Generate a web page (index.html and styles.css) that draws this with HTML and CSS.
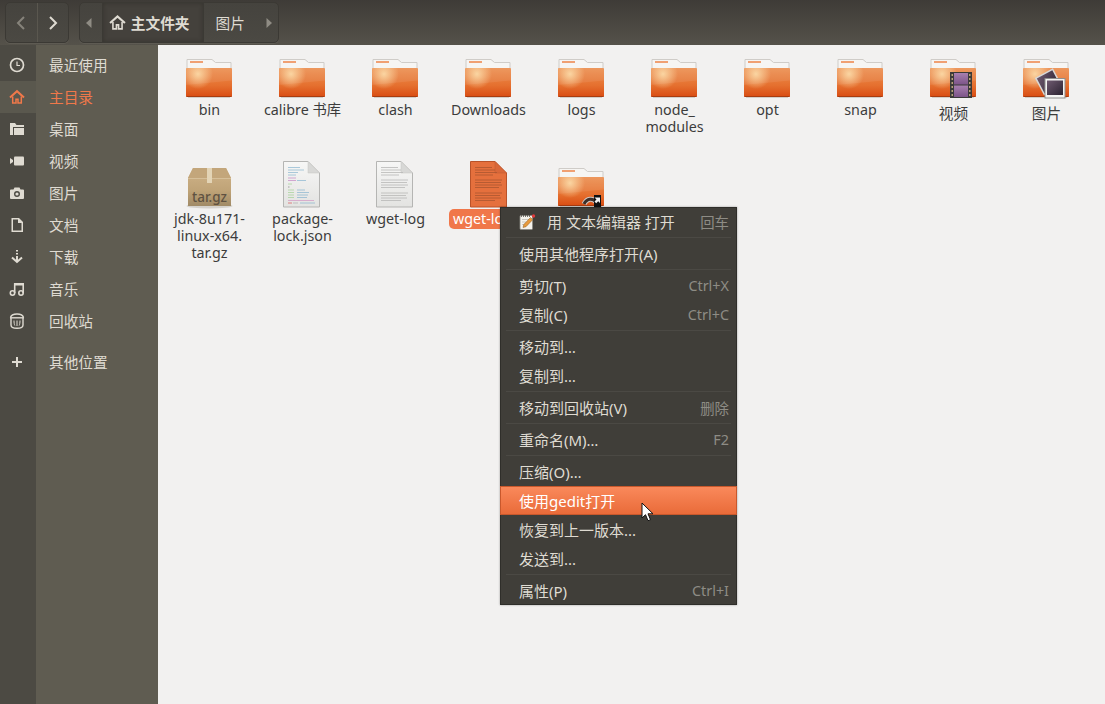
FILE: index.html
```html
<!DOCTYPE html>
<html lang="zh-CN">
<head>
    <meta charset="UTF-8">
    <title>图片</title>
    <link rel="stylesheet" href="styles.css">
</head>
<body>
    <svg class="defs" width="0" height="0">
        <defs>
            <linearGradient id="folder-body" x1="0" y1="0" x2="0" y2="1">
                <stop offset="0" stop-color="#ec8f50"/>
                <stop offset="0.6" stop-color="#e5702f"/>
                <stop offset="1" stop-color="#d94c12"/>
            </linearGradient>
            <radialGradient id="folder-glow" gradientUnits="userSpaceOnUse" cx="13" cy="21" r="15">
                <stop offset="0" stop-color="#fbd9a6" stop-opacity="0.95"/>
                <stop offset="1" stop-color="#fbd9a6" stop-opacity="0"/>
            </radialGradient>
            <linearGradient id="box-body" x1="0" y1="0" x2="0" y2="1">
                <stop offset="0" stop-color="#cfb389"/>
                <stop offset="0.6" stop-color="#bfa377"/>
                <stop offset="1" stop-color="#a08a66"/>
            </linearGradient>
            <linearGradient id="film-frame" x1="0" y1="0" x2="0" y2="1">
                <stop offset="0" stop-color="#a87fb0"/>
                <stop offset="1" stop-color="#7c5488"/>
            </linearGradient>
            <linearGradient id="photo-fill" x1="0" y1="0" x2="1" y2="1">
                <stop offset="0" stop-color="#6f5a70"/>
                <stop offset="1" stop-color="#2a2230"/>
            </linearGradient>
            <linearGradient id="paper" x1="0" y1="0" x2="0" y2="1">
                <stop offset="0" stop-color="#f7f7f6"/>
                <stop offset="1" stop-color="#e3e3e1"/>
            </linearGradient>

            <symbol id="folder" viewBox="0 0 48 48" overflow="visible">
                <path d="M2 6.500h25l3.500 3H46v8H2z" fill="#f6f5f3" stroke="#cfccc8" stroke-width="1"/>
                <rect x="5" y="8" width="13" height="2" fill="#f0a072"/>
                <rect x="1" y="15" width="46" height="29" rx="1" fill="url(#folder-body)"/>
                <path d="M1 16a1 1 0 0 1 1-1h44a1 1 0 0 1 1 1v11.500L1 32z" fill="#fff" opacity="0.08"/>
                <rect x="1" y="15" width="46" height="29" rx="1" fill="url(#folder-glow)"/>
                <path d="M1.500 43.500h45" stroke="#a83c10" stroke-width="1"/>
                <rect x="3" y="44" width="42" height="1" fill="#d2cec9"/>
            </symbol>

            <symbol id="ic-clock" viewBox="0 0 16 16">
                <circle cx="8" cy="8" r="6.500" fill="none" stroke="currentColor" stroke-width="1.700"/>
                <path d="M8 4.500V8.500H11" fill="none" stroke="currentColor" stroke-width="1.200"/>
            </symbol>
            <symbol id="ic-home" viewBox="0 0 16 16">
                <path d="M1 8.500L8 2.200 15 8.500" fill="none" stroke="currentColor" stroke-width="2"/>
                <path d="M3.700 7.500V14H7V10.200H9V14H12.300V7.500" fill="none" stroke="currentColor" stroke-width="1.500"/>
            </symbol>
            <symbol id="ic-folder" viewBox="0 0 16 16">
                <path d="M1 2h5l1.500 2H15v2H4v8H1z" fill="currentColor"/>
                <rect x="5" y="7" width="10" height="7" fill="currentColor"/>
            </symbol>
            <symbol id="ic-video" viewBox="0 0 16 16">
                <rect x="5" y="3.500" width="10" height="9" rx="1" fill="currentColor"/>
                <path d="M1 5l3 2v2l-3 2z" fill="currentColor"/>
            </symbol>
            <symbol id="ic-camera" viewBox="0 0 16 16">
                <path fill-rule="evenodd" d="M5.500 2.500h5l1 2H14a1 1 0 0 1 1 1V13a1 1 0 0 1-1 1H2a1 1 0 0 1-1-1V5.500a1 1 0 0 1 1-1h2.500zM8 6a3 3 0 1 0 0 6a3 3 0 0 0 0-6z" fill="currentColor"/>
                <circle cx="8" cy="9" r="1.600" fill="currentColor"/>
            </symbol>
            <symbol id="ic-file" viewBox="0 0 16 16">
                <path fill-rule="evenodd" d="M2.500 1H10l4 4v10H2.500zM4 2.500V13.500H12.500V6H9V2.500z" fill="currentColor"/>
            </symbol>
            <symbol id="ic-download" viewBox="0 0 16 16">
                <path d="M7 1h2v1.500H7zM7 4h2v1.500H7zM7 7h2v5H7z" fill="currentColor"/>
                <path d="M3 8.500L8 13l5-4.500" fill="none" stroke="currentColor" stroke-width="2"/>
            </symbol>
            <symbol id="ic-music" viewBox="0 0 16 16">
                <circle cx="3.500" cy="12" r="2.200" fill="none" stroke="currentColor" stroke-width="1.600"/>
                <circle cx="12" cy="12" r="2.200" fill="none" stroke="currentColor" stroke-width="1.600"/>
                <path d="M5.700 12V3H14.200V12" fill="none" stroke="currentColor" stroke-width="1.600"/>
                <rect x="5" y="2" width="10" height="2.500" fill="currentColor"/>
            </symbol>
            <symbol id="ic-trash" viewBox="0 0 16 16">
                <path d="M1.500 4.500C2 2.500 4 1 8 1s6 1.500 6.500 3.500" fill="none" stroke="currentColor" stroke-width="1.400"/>
                <path d="M1 4.800h14" stroke="currentColor" stroke-width="1.400"/>
                <path d="M2 5v7c0 2 2 3.300 6 3.300s6-1.300 6-3.300V5" fill="none" stroke="currentColor" stroke-width="1.400"/>
                <path d="M5 7.500c0 2 .3 4 .8 5M8 7.500v5.500M11 7.500c0 2-.3 4-.8 5" fill="none" stroke="currentColor" stroke-width="1"/>
            </symbol>
            <symbol id="ic-plus" viewBox="0 0 16 16">
                <path d="M7 3h2v4h4v2H9v4H7V9H3V7h4z" fill="currentColor"/>
            </symbol>
        </defs>
    </svg>

    <div class="window">
        <header class="toolbar">
            <div class="btn-group nav-group">
                <div class="nav-btn disabled">
                    <svg width="16" height="16" viewBox="0 0 16 16"><path d="M11 2L5 8l6 6" fill="none" stroke="currentColor" stroke-width="2"/></svg>
                </div>
                <div class="nav-btn">
                    <svg width="16" height="16" viewBox="0 0 16 16"><path d="M5 2l6 6-6 6" fill="none" stroke="currentColor" stroke-width="2"/></svg>
                </div>
            </div>
            <div class="btn-group path-group">
                <div class="path-arrow back">
                    <svg width="8" height="12" viewBox="0 0 8 12"><path d="M6.500 1v10L1 6z" fill="currentColor"/></svg>
                </div>
                <div class="path-btn active">
                    <svg class="path-home" width="17" height="17"><use href="#ic-home"/></svg>
                    <span>主文件夹</span>
                </div>
                <div class="path-btn"><span>图片</span></div>
                <div class="path-arrow forward">
                    <svg width="8" height="12" viewBox="0 0 8 12"><path d="M1.500 1v10L7 6z" fill="currentColor"/></svg>
                </div>
            </div>
        </header>

        <div class="content">
            <nav class="sidebar">
                <div class="side-item"><span class="side-icon"><svg width="16" height="16"><use href="#ic-clock"/></svg></span><span class="side-label">最近使用</span></div>
                <div class="side-item current"><span class="side-icon"><svg width="16" height="16"><use href="#ic-home"/></svg></span><span class="side-label">主目录</span></div>
                <div class="side-item"><span class="side-icon"><svg width="16" height="16"><use href="#ic-folder"/></svg></span><span class="side-label">桌面</span></div>
                <div class="side-item"><span class="side-icon"><svg width="16" height="16"><use href="#ic-video"/></svg></span><span class="side-label">视频</span></div>
                <div class="side-item"><span class="side-icon"><svg width="16" height="16"><use href="#ic-camera"/></svg></span><span class="side-label">图片</span></div>
                <div class="side-item"><span class="side-icon"><svg width="16" height="16"><use href="#ic-file"/></svg></span><span class="side-label">文档</span></div>
                <div class="side-item"><span class="side-icon"><svg width="16" height="16"><use href="#ic-download"/></svg></span><span class="side-label">下载</span></div>
                <div class="side-item"><span class="side-icon"><svg width="16" height="16"><use href="#ic-music"/></svg></span><span class="side-label">音乐</span></div>
                <div class="side-item"><span class="side-icon"><svg width="16" height="16"><use href="#ic-trash"/></svg></span><span class="side-label">回收站</span></div>
                <div class="side-item other"><span class="side-icon"><svg width="16" height="16"><use href="#ic-plus"/></svg></span><span class="side-label">其他位置</span></div>
                <div class="side-fill"></div>
            </nav>

            <main class="files">
                <div class="file"><svg class="file-icon"><use href="#folder"/></svg><div class="file-name">bin</div></div>
                <div class="file"><svg class="file-icon"><use href="#folder"/></svg><div class="file-name">calibre 书库</div></div>
                <div class="file"><svg class="file-icon"><use href="#folder"/></svg><div class="file-name">clash</div></div>
                <div class="file"><svg class="file-icon"><use href="#folder"/></svg><div class="file-name">Downloads</div></div>
                <div class="file"><svg class="file-icon"><use href="#folder"/></svg><div class="file-name">logs</div></div>
                <div class="file"><svg class="file-icon"><use href="#folder"/></svg><div class="file-name">node_<br>modules</div></div>
                <div class="file"><svg class="file-icon"><use href="#folder"/></svg><div class="file-name">opt</div></div>
                <div class="file"><svg class="file-icon"><use href="#folder"/></svg><div class="file-name">snap</div></div>
                <div class="file">
                    <svg class="file-icon" viewBox="0 0 48 48">
                        <use href="#folder" width="48" height="48"/>
                        <rect x="21" y="19" width="22" height="26" fill="#3b3a38"/>
                        <rect x="25" y="20" width="14" height="11.500" fill="url(#film-frame)"/>
                        <rect x="25" y="32.500" width="14" height="11.500" fill="url(#film-frame)"/>
                        <path d="M22.500 21h1.500v2h-1.500zM22.500 25h1.500v2h-1.500zM22.500 29h1.500v2h-1.500zM22.500 33h1.500v2h-1.500zM22.500 37h1.500v2h-1.500zM22.500 41h1.500v2h-1.500zM40 21h1.500v2H40zM40 25h1.500v2H40zM40 29h1.500v2H40zM40 33h1.500v2H40zM40 37h1.500v2H40zM40 41h1.500v2H40z" fill="#b9a27a"/>
                    </svg>
                    <div class="file-name cjk-name">视频</div>
                </div>
                <div class="file">
                    <svg class="file-icon" viewBox="0 0 48 48">
                        <use href="#folder" width="48" height="48"/>
                        <rect x="17" y="20" width="19" height="18" fill="url(#photo-fill)" stroke="#d8d8d6" stroke-width="1.500" transform="rotate(-28 26 29)"/>
                        <rect x="23" y="25.500" width="20" height="19.500" fill="#f4f4f3" stroke="#8f8f8d" stroke-width="1"/>
                        <rect x="25" y="27.500" width="16" height="14.500" fill="url(#photo-fill)"/>
                    </svg>
                    <div class="file-name cjk-name">图片</div>
                </div>

                <div class="file">
                    <svg class="file-icon" viewBox="0 0 48 48">
                        <ellipse cx="24.500" cy="44" rx="23" ry="2.500" fill="#d5d2cd"/>
                        <path d="M8 6h33l5 10v28H3V16z" fill="url(#box-body)"/>
                        <path d="M8 6h33l5 10H3z" fill="#c3a67b"/>
                        <rect x="3" y="16" width="43" height="1" fill="#d6bf99"/>
                        <rect x="22" y="6" width="5" height="15" fill="#e3d4b6"/>
                        <text class="tar-label" x="24.500" y="40" text-anchor="middle">tar.gz</text>
                    </svg>
                    <div class="file-name">jdk-8u171-<br>linux-x64.<br>tar.gz</div>
                </div>
                <div class="file">
                    <svg class="file-icon" viewBox="0 0 48 48">
                        <path d="M5.500-.5H30l11.500 11.500V45H5.500z" fill="url(#paper)" stroke="#b5b5b3"/>
                        <path d="M30-.5V11h11.500z" fill="#d8d8d6" stroke="#c4c4c2" stroke-width="0.500"/>
                        <g stroke-width="0.800" opacity="0.8">
                            <path d="M10 5.500h12M10 8h16M10 10.500h10M10 13h8" stroke="#7fb0cd"/>
                            <path d="M10 16h8M10 18.500h8" stroke="#c07fc0"/>
                            <path d="M19 18.500h9" stroke="#7fb0cd"/>
                            <path d="M10 22h4" stroke="#9dcf8f"/>
                            <path d="M10 25h1.500" stroke="#777"/>
                            <path d="M10 28h6M10 30.500h6M10 33h6M10 35.500h6" stroke="#9dcf8f"/>
                            <path d="M19 28h8M19 30.500h12M19 33h11M19 35.500h10" stroke="#7fb0cd"/>
                            <path d="M10 38.500h26" stroke="#d08fc0"/>
                            <path d="M10 41h4" stroke="#d94a4a"/>
                            <path d="M15 41h5" stroke="#aaa"/>
                            <path d="M22 41h15" stroke="#7fb0cd"/>
                        </g>
                    </svg>
                    <div class="file-name">package-<br>lock.json</div>
                </div>
                <div class="file">
                    <svg class="file-icon" viewBox="0 0 48 48">
                        <path d="M5.500-.5H30l11.500 11.500V45H5.500z" fill="url(#paper)" stroke="#b5b5b3"/>
                        <path d="M30-.5V11h11.500z" fill="#d8d8d6" stroke="#c4c4c2" stroke-width="0.500"/>
                        <path d="M10 5.500h17M10 8h20M10 10.500h22M10 13h18M10 18h27M10 20.500h26M10 23h27M10 25.500h24M10 31h27M10 33.500h25M10 36h26M10 38.500h20" stroke="#b8b8b6" stroke-width="0.800"/>
                    </svg>
                    <div class="file-name">wget-log</div>
                </div>
                <div class="file selected">
                    <svg class="file-icon" viewBox="0 0 48 48">
                        <path d="M6.500-.5H31l11.500 11.500V45H6.500z" fill="#e5703d" stroke="#b9532a"/>
                        <path d="M31-.5V11h11.500z" fill="#d9683a" stroke="#bf5a30" stroke-width="0.500"/>
                        <path d="M11 5.500h17M11 8h20M11 10.500h22M11 13h18M11 18h27M11 20.500h26M11 23h27M11 25.500h24M11 31h27M11 33.500h25M11 36h26M11 38.500h20" stroke="#ab5530" stroke-width="0.800"/>
                    </svg>
                    <div class="file-name">wget-log.1</div>
                </div>
                <div class="file">
                    <svg class="file-icon" viewBox="0 0 48 48">
                        <use href="#folder" width="48" height="48"/>
                        <path d="M27 42c3-6 9-6 12-2" fill="none" stroke="#cfc6c0" stroke-width="5"/>
                        <path d="M27 42c3-6 9-6 12-2" fill="none" stroke="#3b2f2a" stroke-width="3"/>
                        <rect x="37" y="33" width="7" height="12" fill="#111"/>
                        <path d="M37.500 35.500h5.500v5.500l-1.800-1.800-2 2-1.700-1.700 2-2z" fill="#f2f2f2"/>
                    </svg>
                </div>
            </main>
        </div>

        <div class="menu">
            <div class="menu-item first">
                <svg class="menu-icon" width="18" height="18" viewBox="0 0 18 18">
                    <rect x="2" y="2.500" width="12.500" height="14" rx="1" fill="#f4f2ec" stroke="#8c8a84" stroke-width="0.800"/>
                    <path d="M3.500 2v2M5.500 2v2M7.500 2v2M9.500 2v2M11.500 2v2" stroke="#55534d" stroke-width="0.800"/>
                    <path d="M4 6.500h8M4 9h4M4 11.500h3" stroke="#b9b7b0" stroke-width="0.700"/>
                    <path d="M5 14.500l.8-3 6.700-7 2.200 2.200-6.700 7z" fill="#e89a3c" stroke="#8a5a1e" stroke-width="0.500"/>
                    <circle cx="15.500" cy="3" r="1.700" fill="#e23b3b"/>
                </svg>
                <span class="menu-text">用 文本编辑器 打开</span>
                <span class="menu-key">回车</span>
            </div>
            <div class="menu-sep"></div>
            <div class="menu-item"><span class="menu-text">使用其他程序打开(A)</span></div>
            <div class="menu-sep"></div>
            <div class="menu-item"><span class="menu-text">剪切(T)</span><span class="menu-key">Ctrl+X</span></div>
            <div class="menu-item"><span class="menu-text">复制(C)</span><span class="menu-key">Ctrl+C</span></div>
            <div class="menu-sep"></div>
            <div class="menu-item"><span class="menu-text">移动到…</span></div>
            <div class="menu-item"><span class="menu-text">复制到…</span></div>
            <div class="menu-sep"></div>
            <div class="menu-item"><span class="menu-text">移动到回收站(V)</span><span class="menu-key">删除</span></div>
            <div class="menu-sep"></div>
            <div class="menu-item"><span class="menu-text">重命名(M)…</span><span class="menu-key">F2</span></div>
            <div class="menu-sep"></div>
            <div class="menu-item"><span class="menu-text">压缩(O)…</span></div>
            <div class="menu-item hover"><span class="menu-text">使用gedit打开</span></div>
            <div class="menu-item"><span class="menu-text">恢复到上一版本...</span></div>
            <div class="menu-item"><span class="menu-text">发送到...</span></div>
            <div class="menu-sep"></div>
            <div class="menu-item last"><span class="menu-text">属性(P)</span><span class="menu-key">Ctrl+I</span></div>
        </div>

        <svg class="cursor" width="14" height="21" viewBox="0 0 14 21">
            <path d="M1 1v15l3.500-3.300 2.500 6 2.500-1-2.500-5.900h5z" fill="#fff" stroke="#111" stroke-width="1"/>
        </svg>
    </div>
</body>
</html>
```

FILE: styles.css
```css
* {
    box-sizing: border-box;
}
body {
    margin: 0;
    font-family: "Noto Sans", "Noto Sans CJK SC", sans-serif;
    font-size: 14.67px;
    background: #f2f1f0;
}
.defs {
    position: absolute;
}
.window {
    position: relative;
    width: 1105px;
    height: 704px;
    display: flex;
    flex-direction: column;
    overflow: hidden;
}

/* toolbar */
.toolbar {
    height: 45px;
    flex: none;
    display: flex;
    gap: 10px;
    padding: 2px 0 2px 5px;
    background: linear-gradient(#3e3b37, #55524a);
    color: #dfdbd2;
}
.btn-group {
    display: flex;
    height: 41px;
    border: 1px solid #3b3934;
    border-radius: 5px;
    background: linear-gradient(#45433e, #4b4943);
    box-shadow: 0 1px 0 #5e5b53;
}
.nav-group {
    width: 64px;
}
.nav-btn {
    flex: 1;
    display: flex;
    align-items: center;
    justify-content: center;
    color: #dfdbd2;
}
.nav-btn + .nav-btn {
    border-left: 1px solid #5a574f;
}
.nav-btn.disabled {
    color: #86837b;
}
.path-group {
    width: 200px;
}
.path-arrow {
    width: 22px;
    display: flex;
    align-items: center;
    justify-content: center;
    color: #8f8c84;
}
.path-arrow.back {
    padding-right: 3px;
}
.path-arrow.forward {
    padding-left: 3px;
}
.path-btn {
    width: 53px;
    display: flex;
    align-items: center;
    justify-content: center;
    gap: 5px;
    border-left: 1px solid #3b3934;
}
.path-btn:last-of-type {
    border-right: 1px solid #3b3934;
}
.path-btn.active {
    width: 102px;
    padding-right: 8px;
    font-weight: 700;
    background: #44413c;
    box-shadow: inset 0 0 4px #35332e;
}
.path-home {
    flex: none;
}

/* sidebar */
.content {
    flex: 1;
    display: flex;
    min-height: 0;
}
.sidebar {
    width: 158px;
    flex: none;
    display: flex;
    flex-direction: column;
    padding-top: 4px;
    background: linear-gradient(to right, #4c4a43 36px, #5f5c51 36px);
    color: #dfdbd2;
}
.side-item {
    height: 32px;
    flex: none;
    display: flex;
    align-items: center;
    line-height: 32px;
}
.side-item.other {
    margin-top: 9px;
}
.side-icon {
    width: 36px;
    height: 32px;
    flex: none;
    display: flex;
    align-items: center;
    justify-content: center;
    padding-right: 2px;
}
.side-label {
    margin-left: 13px;
}
.side-item.current {
    color: #f0784a;
}
.side-item.current .side-icon {
    background: #5a584e;
}
.side-fill {
    flex: 1;
}

/* file grid */
.files {
    flex: 1;
    display: grid;
    grid-template-columns: repeat(10, 93px);
    grid-auto-rows: 109px;
    padding: 8px 0 0 4.5px;
    background: #f2f1f0;
    color: #3c3c3c;
}
.file {
    display: flex;
    flex-direction: column;
    align-items: center;
}
.file-icon {
    width: 48px;
    height: 48px;
    flex: none;
    overflow: visible;
}
.file-name {
    margin-left: 1px;
    padding: 0 4px;
    font-size: 14.3px;
    line-height: 17px;
    text-align: center;
    white-space: nowrap;
    border-radius: 5px;
}
.cjk-name {
    margin-top: 4px;
    font-size: 14.67px;
}
.selected .file-name {
    margin-top: -1px;
    padding: 1px 4px 2px;
    background: #f0774a;
    color: #fff;
}
.tar-label {
    font-family: "Noto Sans", sans-serif;
    font-size: 13.5px;
    font-weight: 500;
    fill: #5f5241;
}

/* context menu */
.menu {
    position: absolute;
    left: 500px;
    top: 207px;
    width: 237px;
    border: 1px solid #2f2e2a;
    background: #403e39;
    color: #dfdbd2;
    font-size: 15px;
    box-shadow: 0 0 2px rgba(0, 0, 0, 0.35);
}
.menu-item {
    height: 29px;
    display: flex;
    align-items: center;
    justify-content: space-between;
    padding: 0 7px 1px 18px;
}
.menu-item.first {
    height: 28px;
    justify-content: flex-start;
    padding-left: 17px;
}
.menu-item.last {
    height: 28px;
    padding-top: 1px;
    padding-bottom: 0;
}
.menu-icon {
    flex: none;
    margin-right: 11px;
}
.first .menu-key {
    margin-left: auto;
}
.menu-key {
    color: #8e8c85;
    font-size: 14.4px;
}
.menu-sep {
    height: 3px;
    margin: 0 5px;
    padding-top: 1px;
}
.menu-sep::after {
    content: "";
    display: block;
    height: 1px;
    background: #4b4944;
}
.menu-item.hover {
    margin: 0 -1px;
    padding-left: 19px;
    background: linear-gradient(#fa8a5c, #e96a38);
    box-shadow: inset 0 0 0 1px #c9582c;
    color: #fff;
}

.cursor {
    position: absolute;
    left: 641px;
    top: 502px;
}
```
